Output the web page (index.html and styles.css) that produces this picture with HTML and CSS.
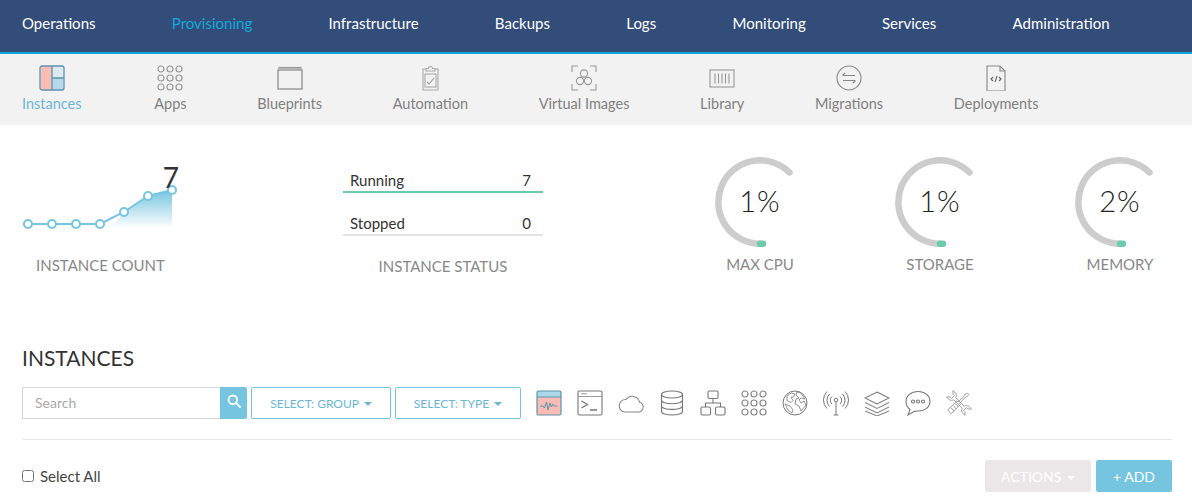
FILE: index.html
```html
<!DOCTYPE html>
<html lang="en">
<head>
    <meta charset="UTF-8">
    <title>Instances</title>
    <link rel="stylesheet" href="styles.css">
</head>
<body>
    <nav class="topnav">
        <a>Operations</a>
        <a class="active">Provisioning</a>
        <a>Infrastructure</a>
        <a>Backups</a>
        <a>Logs</a>
        <a>Monitoring</a>
        <a>Services</a>
        <a>Administration</a>
    </nav>

    <nav class="subnav">
        <a class="active">
            <svg viewBox="0 0 26 26"><rect x="1.5" y="1" width="12" height="24" fill="#f9bdb8"/><rect x="13.5" y="1" width="11" height="12" fill="#dce9ef"/><rect x="13.5" y="13" width="11" height="12" fill="#b5d9e9"/><rect x="1" y="1" width="24" height="24" rx="2" fill="none" stroke="#5f93aa" stroke-width="1.3"/><path d="M13 1v24M13 13h12" fill="none" stroke="#5f93aa" stroke-width="1.3"/></svg>
            Instances
        </a>
        <a>
            <svg viewBox="0 0 26 26" fill="none" stroke="#999" stroke-width="1.2"><circle cx="4" cy="4" r="3"/><circle cx="13" cy="4" r="3"/><circle cx="22" cy="4" r="3"/><circle cx="4" cy="13" r="3"/><circle cx="13" cy="13" r="3"/><circle cx="22" cy="13" r="3"/><circle cx="4" cy="22" r="3"/><circle cx="13" cy="22" r="3"/><circle cx="22" cy="22" r="3"/></svg>
            Apps
        </a>
        <a>
            <svg viewBox="0 0 26 26" fill="none" stroke="#888" stroke-width="1.2"><rect x="1" y="5" width="24" height="19"/><path d="M1.5 2.5h23" stroke="#999" stroke-width="1.2"/><path d="M1 4h24" stroke="#aaa" stroke-width="1.6"/></svg>
            Blueprints
        </a>
        <a>
            <svg viewBox="0 0 26 26" fill="none" stroke="#aaa" stroke-width="1.1"><path d="M9 4H6v21h15V4h-3"/><path d="M9 6V3.5h2.5a2 2 0 0 1 4 0H18V6z"/><rect x="8" y="9" width="11" height="13"/><path d="M10 17l2 2 5-6" stroke="#999"/></svg>
            Automation
        </a>
        <a>
            <svg viewBox="0 0 26 26" fill="none" stroke="#999" stroke-width="1.1"><path d="M1 7V1h6M19 1h6v6M1 19v6h6M19 25h6v-6"/><circle cx="13" cy="8.5" r="3.6"/><circle cx="9" cy="16" r="3.6"/><circle cx="17" cy="16" r="3.6"/></svg>
            Virtual Images
        </a>
        <a>
            <svg viewBox="0 0 26 26" fill="none" stroke="#999" stroke-width="1.1"><rect x="1" y="5" width="24" height="17"/><path d="M6 8.5v10M9.5 8.5v10M13 8.5v10M16.5 8.5v10M20 8.5v10"/></svg>
            Library
        </a>
        <a>
            <svg viewBox="0 0 26 26" fill="none" stroke="#888" stroke-width="1.1"><circle cx="13" cy="13" r="12"/><path d="M7 10.5h12M9 8l-2.5 2.5M7 15.5h12M17 18l2.5-2.5"/></svg>
            Migrations
        </a>
        <a>
            <svg viewBox="0 0 26 26" fill="none" stroke="#888" stroke-width="1.1"><path d="M4 1h13l5 5v20H4z"/><path d="M17 1v5h5"/><path d="M10 12l-2 2 2 2M16 12l2 2-2 2M14 11l-2 6" stroke="#666"/></svg>
            Deployments
        </a>
    </nav>

    <main class="content">
        <section class="stats">
            <div class="stat stat-count">
                <div class="chart">
                    <svg class="chart-svg" viewBox="0 0 156 62">
                        <defs>
                            <linearGradient id="fade" x1="0" y1="0" x2="0" y2="1">
                                <stop offset="0" stop-color="#75c4e0"/>
                                <stop offset="1" stop-color="#ffffff"/>
                            </linearGradient>
                        </defs>
                        <path d="M102 43l24-16 24-6v38h-62z" fill="url(#fade)"/>
                        <polyline points="6,55 30,55 54,55 78,55 102,43 126,27 150,21" fill="none" stroke="#75c4e0" stroke-width="2"/>
                        <g fill="#fff" stroke="#75c4e0" stroke-width="2">
                            <circle cx="6" cy="55" r="4"/><circle cx="30" cy="55" r="4"/><circle cx="54" cy="55" r="4"/><circle cx="78" cy="55" r="4"/><circle cx="102" cy="43" r="4"/><circle cx="126" cy="27" r="4"/><circle cx="150" cy="21" r="4"/>
                        </g>
                    </svg>
                    <span class="chart-value">7</span>
                </div>
                <div class="stat-label">INSTANCE COUNT</div>
            </div>

            <div class="stat stat-status">
                <div class="status-row status-running"><span>Running</span><span>7</span></div>
                <div class="status-row status-stopped"><span>Stopped</span><span>0</span></div>
                <div class="stat-label">INSTANCE STATUS</div>
            </div>

            <div class="gauges">
                <div class="gauge">
                    <div class="dial">
                        <svg viewBox="0 0 90 90" fill="none" stroke-width="6.5" stroke-linecap="round"><path d="M45 86.7A41.7 41.7 0 1 1 74.5 15.5" stroke="#cccccc"/><path d="M45 86.7h3" stroke="#6ccbaa"/></svg>
                        <span class="dial-value">1%</span>
                    </div>
                    <div class="stat-label">MAX CPU</div>
                </div>
                <div class="gauge">
                    <div class="dial">
                        <svg viewBox="0 0 90 90" fill="none" stroke-width="6.5" stroke-linecap="round"><path d="M45 86.7A41.7 41.7 0 1 1 74.5 15.5" stroke="#cccccc"/><path d="M45 86.7h3" stroke="#6ccbaa"/></svg>
                        <span class="dial-value">1%</span>
                    </div>
                    <div class="stat-label">STORAGE</div>
                </div>
                <div class="gauge">
                    <div class="dial">
                        <svg viewBox="0 0 90 90" fill="none" stroke-width="6.5" stroke-linecap="round"><path d="M45 86.7A41.7 41.7 0 1 1 74.5 15.5" stroke="#cccccc"/><path d="M45 86.7h3" stroke="#6ccbaa"/></svg>
                        <span class="dial-value">2%</span>
                    </div>
                    <div class="stat-label">MEMORY</div>
                </div>
            </div>
        </section>

        <h2 class="title">INSTANCES</h2>

        <div class="toolbar">
            <div class="search">
                <span class="search-input">Search</span>
                <span class="search-btn">
                    <svg viewBox="0 0 14 14" fill="none" stroke="#fff" stroke-width="1.8"><circle cx="5.8" cy="5.8" r="4.3"/><path d="M9 9l4 4" stroke-linecap="round"/></svg>
                </span>
            </div>
            <button class="select select-group">SELECT: GROUP <i class="caret"></i></button>
            <button class="select select-type">SELECT: TYPE <i class="caret"></i></button>
            <div class="filters">
                <svg viewBox="0 0 26 26"><rect x="1" y="1" width="24" height="24" rx="1.5" fill="#f9bdb8"/><path d="M1 2.5A1.5 1.5 0 0 1 2.5 1h21A1.5 1.5 0 0 1 25 2.5V7H1z" fill="#a9d9e8"/><rect x="1" y="1" width="24" height="24" rx="1.5" fill="none" stroke="#5f93aa" stroke-width="1.2"/><path d="M1 7h24" stroke="#5f93aa"/><path d="M4 16h3l1.5 2 2-6 1.5 8 2-7 1.5 4 1.5-3 1.5 2h3" fill="none" stroke="#5f93aa"/></svg>
                <svg viewBox="0 0 26 26" fill="none" stroke="#777" stroke-width="1.1"><rect x="1" y="1" width="24" height="24" rx="1.5"/><path d="M1 6.5h24M4 3.8h6" stroke="#999"/><path d="M4.5 11l6 3.5-6 3.5M13 20h7" stroke-width="1.3"/></svg>
                <svg viewBox="0 0 26 26" fill="none" stroke="#888" stroke-width="1.1"><path d="M6.500 22H20a5 5 0 0 0 1.500-9.800A7.500 7.500 0 0 0 8 9.500 6.300 6.300 0 0 0 6.500 22z"/></svg>
                <svg viewBox="0 0 26 26" fill="none" stroke="#777" stroke-width="1.1"><ellipse cx="13" cy="4.5" rx="10.5" ry="3.5"/><path d="M2.5 4.5v17c0 2 4.700 3.500 10.500 3.500s10.500-1.500 10.500-3.500v-17M2.500 10.200c0 2 4.700 3.500 10.500 3.500s10.500-1.500 10.500-3.500M2.500 15.900c0 2 4.700 3.500 10.500 3.500s10.500-1.500 10.500-3.500"/></svg>
                <svg viewBox="0 0 26 26" fill="none" stroke="#777" stroke-width="1.1"><rect x="8" y="1" width="10" height="7.5" rx="1.5"/><rect x="1" y="17" width="9.5" height="8" rx="1.5"/><rect x="15.5" y="17" width="9.5" height="8" rx="1.5"/><path d="M13 8.500V13M5.500 17v-4h15v4"/></svg>
                <svg viewBox="0 0 26 26" fill="none" stroke="#888" stroke-width="1.2"><circle cx="4" cy="4" r="3"/><circle cx="13" cy="4" r="3"/><circle cx="22" cy="4" r="3"/><circle cx="4" cy="13" r="3"/><circle cx="13" cy="13" r="3"/><circle cx="22" cy="13" r="3"/><circle cx="4" cy="22" r="3"/><circle cx="13" cy="22" r="3"/><circle cx="22" cy="22" r="3"/></svg>
                <svg viewBox="0 0 26 26" fill="none" stroke="#777" stroke-width="1"><circle cx="13" cy="13" r="12"/><path d="M5 6l4-3 4 1-1 2.500-3 1 2 3-2 2-4-2zM15 2l4 1 4 6-4-1-2 2 2 3 3-2 2 4-5 6-2-5-4-2 1-5 3-1-3-3zM3 14l5 2 3 4-1 3-4-3z" stroke="#888" stroke-width="0.9"/></svg>
                <svg viewBox="0 0 26 26" fill="none" stroke="#777" stroke-width="1"><circle cx="13" cy="10" r="1.8"/><path d="M13 12v13M10.500 25h5M9 6.500a5 5 0 0 0 0 7.500M17 6.500a5 5 0 0 1 0 7.500M6.500 4a9 9 0 0 0 0 12.500M19.500 4a9 9 0 0 1 0 12.500M4 1.500a12 12 0 0 0 0 17M22 1.500a12 12 0 0 1 0 17"/></svg>
                <svg viewBox="0 0 26 26" fill="none" stroke="#777" stroke-width="1.1"><path d="M13 2l12 6-12 6-12-6z"/><path d="M1 12.500l12 6 12-6M1 17l12 6 12-6M1 21l12 5 12-5" stroke="#888"/></svg>
                <svg viewBox="0 0 26 26" fill="none" stroke="#777" stroke-width="1.1"><path d="M13 1.500c7 0 12 4.500 12 10S20 21 13 21c-1.500 0-3 0-4 .5L3 25l2-5.500C2.500 17.500 1 15 1 11.500c0-5.500 5-10 12-10z"/><circle cx="8" cy="11.5" r="1.5"/><circle cx="13" cy="11.5" r="1.5"/><circle cx="18" cy="11.5" r="1.5"/></svg>
                <svg viewBox="0 0 26 26" fill="none" stroke="#999" stroke-width="0.9"><path transform="rotate(-45 13 13)" d="M11.500 7C8.500 6 8 3.500 8.500 0L11 2.500v2h4v-2L17.500 0c.5 3.500 0 6-3 7v12c3 1 3.500 3.500 3 7L15 23.500v-2h-4v2L8.500 26C8 22.500 8.500 20 11.500 19z"/><path transform="rotate(45 13 13)" d="M12.300 0h1.400l.5 3-.7 1v9h1.500v13h-5V13h1.500V4l-.7-1zM10.500 16h5M10.500 19h5M10.500 22h5"/></svg>
            </div>
        </div>

        <div class="actions">
            <label class="select-all"><input type="checkbox"> Select All</label>
            <div class="action-buttons">
                <button class="btn btn-actions">ACTIONS <i class="caret"></i></button>
                <button class="btn btn-add">+ ADD</button>
            </div>
        </div>
    </main>
</body>
</html>
```

FILE: styles.css
```css
* {
    box-sizing: border-box;
}
html, body {
    height: 502px;
    overflow: hidden;
}
body {
    margin: 0;
    font-family: Lato, sans-serif;
    color: #333;
    background-color: #fff;
}
.topnav {
    display: flex;
    gap: 76.3px;
    align-items: center;
    height: 54px;
    padding: 0 22px 6px;
    background-color: #324d79;
    border-bottom: 2px solid #0fa7da;
    font-size: 15px;
    color: #fff;
}
.topnav .active {
    color: #12a8dc;
}
.subnav {
    display: flex;
    gap: 70.7px;
    height: 71px;
    padding: 11px 22px 0;
    background-color: #f2f2f2;
    font-size: 14.5px;
    color: #808080;
}
.subnav a {
    display: flex;
    flex-direction: column;
    align-items: center;
    gap: 4px;
}
.subnav svg {
    width: 26px;
    height: 26px;
}
.subnav .active {
    margin-right: 2px;
    color: #6bb6d6;
}
.content {
    padding: 0 20px 0 22px;
}
.stats {
    display: flex;
    height: 221px;
    padding-top: 32px;
}
.stat-label {
    font-size: 15px;
    color: #888;
    text-align: center;
}
.stat-count {
    width: 157px;
}
.chart {
    position: relative;
    height: 67px;
}
.chart-svg {
    display: block;
    width: 156px;
    height: 62px;
    position: absolute;
    left: 0;
    top: 12px;
}
.chart-value {
    position: absolute;
    right: 0;
    top: 3px;
    font-size: 28px;
    line-height: 34px;
    color: #333;
}
.stat-count .stat-label {
    margin-top: 32px;
}
.stat-status {
    width: 200px;
    margin-left: 164px;
}
.status-row {
    display: flex;
    justify-content: space-between;
    height: 36px;
    padding: 14px 12px 0 7px;
    font-size: 15px;
    line-height: 18px;
}
.status-running {
    border-bottom: 2px solid #6ccbaa;
}
.status-stopped {
    margin-top: 7px;
    border-bottom: 2px solid #e4e4e4;
}
.stat-status .stat-label {
    margin-top: 21px;
}
.gauges {
    display: flex;
    gap: 90px;
    margin-left: 172px;
}
.gauge {
    width: 90px;
}
.dial {
    display: grid;
    place-items: center;
    width: 90px;
    height: 90px;
}
.dial svg, .dial-value {
    grid-area: 1 / 1;
}
.dial svg {
    width: 90px;
    height: 90px;
}
.dial-value {
    padding-bottom: 3px;
    font-size: 29px;
    font-weight: 300;
    letter-spacing: 1px;
    color: #222;
}
.gauge .stat-label {
    margin-top: 8px;
}
.title {
    margin: 0;
    font-size: 21px;
    font-weight: 400;
    line-height: 24px;
    color: #333;
}
.toolbar {
    display: flex;
    align-items: center;
    gap: 4px;
    margin-top: 17px;
    padding-bottom: 20px;
    border-bottom: 1px solid #e9e9e9;
}
.search {
    display: flex;
    width: 225px;
    height: 32px;
}
.search-input {
    flex: 1;
    padding-left: 12px;
    border: 1px solid #d6d6d6;
    border-right: 0;
    font-size: 14px;
    line-height: 30px;
    color: #aaa;
}
.search-btn {
    display: flex;
    align-items: center;
    justify-content: center;
    width: 27px;
    padding-bottom: 4px;
    background-color: #75c4e0;
    border-radius: 0 2px 2px 0;
}
.search-btn svg {
    width: 14px;
    height: 14px;
}
.select {
    height: 32px;
    padding: 0;
    background-color: #fff;
    border: 1px solid #75c4e0;
    border-radius: 2px;
    font-family: inherit;
    font-size: 12px;
    color: #6bb6d6;
}
.select-group {
    width: 140px;
}
.select-type {
    width: 126px;
}
.caret {
    display: inline-block;
    margin-left: 2px;
    vertical-align: middle;
    border-top: 4px solid currentColor;
    border-left: 4px solid transparent;
    border-right: 4px solid transparent;
}
.filters {
    display: flex;
    gap: 15px;
    margin-left: 11px;
}
.filters svg {
    width: 26px;
    height: 26px;
}
.actions {
    display: flex;
    align-items: center;
    justify-content: space-between;
    margin-top: 20px;
}
.select-all {
    display: flex;
    align-items: center;
    gap: 6px;
    font-size: 15px;
    color: #444;
}
.select-all input {
    width: 12px;
    height: 12px;
    margin: 0;
}
.action-buttons {
    display: flex;
    gap: 5px;
}
.btn {
    height: 32px;
    padding: 0;
    border: 0;
    border-radius: 2px;
    font-family: inherit;
    font-size: 14px;
    color: #fff;
}
.btn-actions {
    width: 106px;
    background-color: #e9e7e7;
}
.btn-add {
    width: 76px;
    background-color: #75c4e0;
}
```
